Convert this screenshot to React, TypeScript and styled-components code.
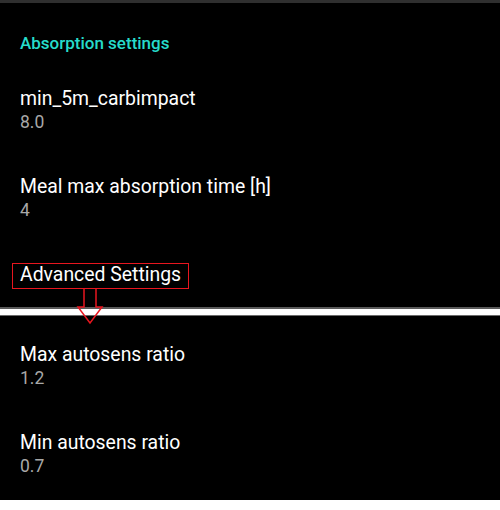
import React from 'react';
import styled, { createGlobalStyle } from 'styled-components';

const GlobalStyle = createGlobalStyle`
  html, body {
    margin: 0;
    padding: 0;
    background: #ffffff;
  }
  body {
    font-family: Roboto, "Noto Sans", "Liberation Sans", sans-serif;
  }
`;

const Screen = styled.div`
  position: relative;
  width: 500px;
  height: 500px;
  background: #000000;
  display: flex;
  flex-direction: column;
  overflow: hidden;
`;

const TopEdge = styled.div`
  height: 3px;
  background: #2f2f2f;
`;

const CategoryHeader = styled.div`
  height: 63px;
  box-sizing: border-box;
  padding: 30px 20px 0;
  color: #26dccb;
  font-size: 17px;
  font-weight: 500;
  line-height: 20px;
`;

const PrefItem = styled.div<{ $height?: number }>`
  position: relative;
  height: ${({ $height }) => $height ?? 88}px;
  box-sizing: border-box;
  padding: 0 20px;
  display: flex;
  flex-direction: column;
  justify-content: center;
`;

const Title = styled.div`
  color: #ffffff;
  font-size: 19.4px;
  line-height: 24px;
`;

const Summary = styled.div`
  color: #a8a8a8;
  font-size: 17.5px;
  line-height: 22px;
`;

const Splice = styled.div`
  height: 9px;
  margin-bottom: 6px;
  background: #ffffff;
  border-top: 2px solid #5a5a5a;
  border-bottom: 1px solid #6a6a6a;
  box-sizing: border-box;
`;

const HighlightBox = styled.div`
  position: absolute;
  left: 12px;
  top: 21px;
  width: 177px;
  height: 26px;
  box-sizing: border-box;
  border: 1.5px solid #e8161f;
  pointer-events: none;
`;

const ArrowMark = styled.svg`
  position: absolute;
  left: 76px;
  top: 288px;
  width: 28px;
  height: 38px;
  z-index: 2;
  overflow: visible;
`;

const prefs = [
  { title: 'min_5m_carbimpact', value: '8.0' },
  { title: 'Meal max absorption time [h]', value: '4' },
];

const autosens = [
  { title: 'Max autosens ratio', value: '1.2' },
  { title: 'Min autosens ratio', value: '0.7' },
];

const App: React.FC = () => {
  return (
    <>
      <GlobalStyle />
      <Screen>
        <TopEdge />
        <CategoryHeader>Absorption settings</CategoryHeader>
        {prefs.map((p) => (
          <PrefItem key={p.title}>
            <Title>{p.title}</Title>
            <Summary>{p.value}</Summary>
          </PrefItem>
        ))}
        <PrefItem $height={65}>
          <Title>Advanced Settings</Title>
          <HighlightBox />
        </PrefItem>
        <Splice />
        {autosens.map((p) => (
          <PrefItem key={p.title}>
            <Title>{p.title}</Title>
            <Summary>{p.value}</Summary>
          </PrefItem>
        ))}
        <ArrowMark viewBox="0 0 28 38">
          <path
            d="M8 1 V19 H2 L14 35 L26 19 H20 V1"
            fill="none"
            stroke="#e8161f"
            strokeWidth="1.5"
          />
        </ArrowMark>
      </Screen>
    </>
  );
};

export default App;
